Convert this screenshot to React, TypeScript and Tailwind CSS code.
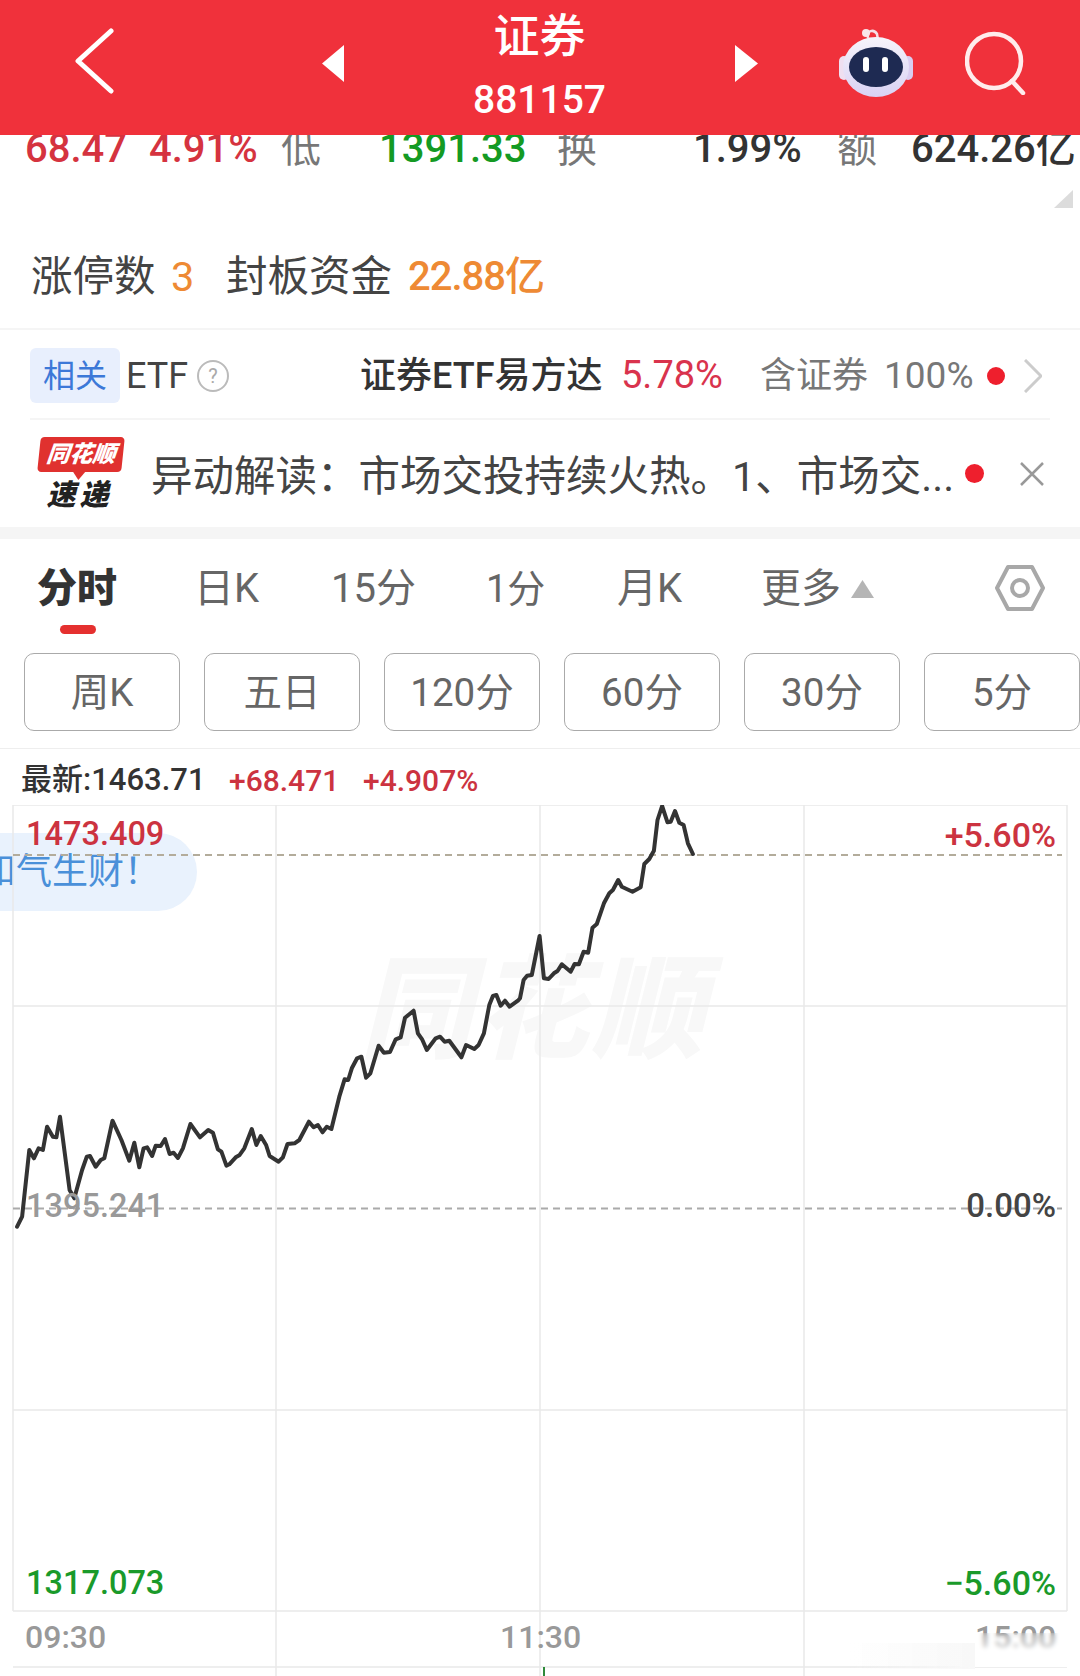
import React from 'react';

const FONT = "[font-family:Roboto,'Noto_Sans_CJK_SC',sans-serif]";

// traced from the chart, [x * 2.8, (y - 750) * 3]
const LEFT: number[][] = [
  [48,1430],[62,1400],[82,1200],[95,1225],[108,1195],[120,1200],[132,1130],[148,1160],[158,1162],[168,1100],[195,1320],[208,1345],[230,1260],[243,1220],[252,1218],[268,1250],[282,1230],[292,1225],[315,1112],[340,1170],[362,1232],[376,1178],[390,1252],[402,1195],[412,1192],[426,1218],[436,1187],[450,1188],[462,1167],[475,1212],[486,1208],[498,1224],[512,1195],[533,1122],[560,1162],[583,1140],[596,1148],[610,1198],[620,1205],[634,1247],[642,1243],[660,1222],[670,1216],[684,1195],[705,1137],[718,1185],[730,1158],[745,1185],[755,1218],[780,1235],[792,1222],[805,1182],[825,1180],[838,1170],[865,1115],[878,1132],[890,1125],[903,1147],[915,1130],[928,1137],[950,1040],[965,988],[975,990],[985,955],[1000,925],[1012,920],[1025,983],[1037,970],[1060,887],[1075,908],[1092,906],[1108,868],[1122,862],[1134,803],[1158,782],[1170,850],[1182,868],[1195,900],[1220,865],[1232,860],[1245,875],[1258,872],[1292,922],[1305,885],[1328,897],[1340,885],[1355,850],[1370,765],[1380,738],[1390,735],[1402,767],[1414,752],[1427,770],[1450,752],
];
// same, second half: [(x - 520) * 2.8, (y - 780) * 3]
const RIGHT: number[][] = [
  [0,655],[10,600],[20,587],[33,585],[55,468],[67,595],[80,597],[95,580],[105,573],[117,553],[142,575],[153,552],[165,553],[178,515],[191,518],[203,443],[215,432],[235,370],[250,340],[260,330],[275,300],[285,320],[315,335],[338,322],[348,252],[362,237],[375,212],[385,120],[398,78],[413,127],[422,125],[434,93],[446,128],[458,135],[470,190],[484,222],
];

const linePoints = [
  ...LEFT.map(([x, y]) => `${(x / 2.8).toFixed(1)},${(750 + y / 3 - 805).toFixed(1)}`),
  ...RIGHT.map(([x, y]) => `${(520 + x / 2.8).toFixed(1)},${(780 + y / 3 - 805).toFixed(1)}`),
].join(' ');

const BUTTONS = ['周K', '五日', '120分', '60分', '30分', '5分'];

const Header = () => (
  <div className="relative z-10 h-[135px] bg-[#f0313b] flex items-start text-white">
    <svg className="ml-[73px] mt-[28px] w-[42px] h-[66px]" viewBox="0 0 42 66" fill="none" stroke="#fff" strokeWidth="5">
      <path d="M38 3 L5 33 L38 63" strokeLinejoin="round" strokeLinecap="round" />
    </svg>
    <svg className="ml-[207px] mt-[45px] w-[22px] h-[37px]" viewBox="0 0 22 37" fill="#fff">
      <path d="M22 0 L22 37 L0 18.500 Z" />
    </svg>
    <div className="w-[391px] flex flex-col items-center">
      <div className="text-[46px] leading-[52px] mt-[10px] font-medium">证券</div>
      <div className="text-[39px] leading-[44px] mt-[16px] font-medium">881157</div>
    </div>
    <svg className="mt-[45px] w-[23px] h-[37px]" viewBox="0 0 23 37" fill="#fff">
      <path d="M0 0 L0 37 L23 18.500 Z" />
    </svg>
    <svg className="ml-[80px] mt-[26px] w-[76px] h-[72px]" viewBox="0 0 76 72">
      <defs>
        <linearGradient id="head" x1="0" y1="0" x2="0" y2="1">
          <stop offset="0" stopColor="#f6f4fb" />
          <stop offset="1" stopColor="#d9d2f4" />
        </linearGradient>
      </defs>
      <path d="M30 12 C28 4 36 3 39 8 L40 14" fill="none" stroke="#f6dfe6" strokeWidth="2.500" />
      <circle cx="28" cy="7" r="4" fill="#f9e6ea" />
      <rect x="1" y="30" width="10" height="24" rx="5" fill="#efdff0" />
      <rect x="65" y="30" width="10" height="24" rx="5" fill="#d9cdf0" />
      <ellipse cx="38" cy="41" rx="33" ry="30" fill="url(#head)" />
      <ellipse cx="38" cy="41" rx="27" ry="20" fill="#1e2a52" />
      <rect x="25" y="31" width="6" height="15" rx="3" fill="#fff" />
      <rect x="44" y="31" width="6" height="15" rx="3" fill="#fff" />
    </svg>
    <svg className="ml-[51px] mt-[31px] w-[64px] h-[64px]" viewBox="0 0 64 64" fill="none" stroke="#ffecec" strokeWidth="4.500">
      <circle cx="29" cy="30" r="27" />
      <path d="M47 50 L58 62" strokeLinecap="round" />
    </svg>
  </div>
);

const QuoteRow = () => (
  <div className="h-[34px] overflow-hidden flex items-end text-[40px] leading-[40px] whitespace-nowrap font-medium">
    <span className="ml-[25px] w-[124px] text-[#d5333f]">68.47</span>
    <span className="w-[132px] text-[#d5333f]">4.91%</span>
    <span className="w-[98px] text-[#777] font-normal">低</span>
    <span className="w-[178px] text-[#149a23]">1391.33</span>
    <span className="w-[136px] text-[#777] font-normal">换</span>
    <span className="w-[144px] text-[#333]">1.99%</span>
    <span className="w-[74px] text-[#777] font-normal">额</span>
    <span className="text-[#333]">624.26亿</span>
  </div>
);

const StatsRow = () => (
  <div className="relative h-[161px] border-b-2 border-[#f5f5f5]">
    <svg className="absolute left-[1054px] top-[21px] w-[19px] h-[18px]" viewBox="0 0 19 18" fill="#dcdcdc">
      <path d="M19 0 L19 18 L0 18 Z" />
    </svg>
    <div className="pt-[83px] flex items-center text-[41.500px] leading-[50px] text-[#444]">
      <span className="ml-[31px] w-[140px]">涨停数</span>
      <span className="w-[55px] text-[#ee8a34]">3</span>
      <span className="w-[182px]">封板资金</span>
      <span className="text-[#ee8a34] font-medium text-[40px] tracking-[-1px]">22.88亿</span>
    </div>
  </div>
);

const EtfRow = () => (
  <div className="mx-[30px] h-[90px] pt-[3px] border-b-2 border-[#f5f5f5] flex items-center text-[36px] whitespace-nowrap">
    <span className="w-[90px] h-[55px] bg-[#e8effd] rounded-md flex items-center justify-center text-[32px] text-[#3c78d8]">相关</span>
    <span className="ml-[6px] w-[71px] text-[#444] text-[36px]">ETF</span>
    <span className="w-[32px] h-[32px] rounded-full border-2 border-[#bbb] flex items-center justify-center text-[20px] text-[#aaa]">?</span>
    <span className="ml-[131px] w-[261px] text-[#333] font-medium">证券ETF易方达</span>
    <span className="w-[139px] text-[#d9334d] text-[38px]">5.78%</span>
    <span className="w-[124px] text-[#777]">含证券</span>
    <span className="w-[103px] text-[#777] text-[37px]">100%</span>
    <span className="w-[18px] h-[18px] rounded-full bg-[#ee1f2d]" />
    <svg className="ml-[19px] w-[18px] h-[34px]" viewBox="0 0 18 34" fill="none" stroke="#ccc" strokeWidth="3">
      <path d="M1 1 L17 17 L1 33" />
    </svg>
  </div>
);

const NewsRow = () => (
  <div className="h-[107px] pt-[6px] flex items-center whitespace-nowrap">
    <div className="ml-[36px] -mt-[4px] w-[90px] h-[76px] flex flex-col items-center">
      <div className="relative w-[84px] h-[35px] bg-[#e0312f] rounded-[4px] -skew-x-6 flex items-center justify-center text-white text-[23px] leading-none font-black italic">
        同花顺
        <div className="absolute left-[36px] top-[35px] border-x-[6px] border-t-[8px] border-x-transparent border-t-[#e0312f]" />
      </div>
      <div className="mt-[8px] -ml-[3px] text-[#222] text-[29px] leading-[30px] font-black italic tracking-[4px]">速递</div>
    </div>
    <span className="ml-[25px] w-[814px] text-[41.500px] text-[#444] leading-[50px]">异动解读：市场交投持续火热。1、市场交...</span>
    <span className="-mt-[6px] w-[19px] h-[19px] rounded-full bg-[#ee1f2d]" />
    <svg className="ml-[36px] -mt-[6px] w-[24px] h-[24px]" viewBox="0 0 24 24" fill="none" stroke="#999" strokeWidth="2.500">
      <path d="M1 1 L23 23 M23 1 L1 23" />
    </svg>
  </div>
);

const Tabs = () => (
  <div className="relative h-[114px] flex items-center text-[39px] text-[#666] whitespace-nowrap pb-[14px]">
    <span className="ml-[37px] w-[159px] font-black text-[#333] text-[40px]">分时</span>
    <span className="-ml-[2px] w-[137px] text-[40px]">日K</span>
    <span className="w-[155px] text-[40px]">15分</span>
    <span className="w-[131px] text-[38px]">1分</span>
    <span className="w-[144px] text-[40px]">月K</span>
    <span className="w-[90px] text-[40px]">更多</span>
    <svg className="w-[23px] h-[18px]" viewBox="0 0 23 18" fill="#b5b5b5"><path d="M11.500 0 L23 18 L0 18 Z" /></svg>
    <svg className="ml-[121px] -mt-[2px] w-[50px] h-[46px]" viewBox="0 0 50 46" fill="none" stroke="#a8a8a8" strokeWidth="4">
      <path d="M13 2 H37 L48 23 L37 44 H13 L2 23 Z" strokeLinejoin="round" />
      <circle cx="25" cy="23" r="8" />
    </svg>
    <div className="absolute left-[60px] top-[86px] w-[36px] h-[9px] rounded-full bg-[#e5302f]" />
  </div>
);

const Buttons = () => (
  <div className="h-[96px] pl-[24px] flex gap-[24px] border-b border-[#eee]">
    {BUTTONS.map(b => (
      <div key={b} className="w-[156px] h-[78px] rounded-[10px] border border-[#aaa] flex items-center justify-center text-[38.500px] text-[#666] pt-[2px]">
        {b}
      </div>
    ))}
  </div>
);

const Chart = () => (
  <div className="relative h-[871px] overflow-hidden">
    <div className="absolute left-[360px] top-[146px] text-[112px] leading-[120px] font-black italic text-[#f8f8f8] tracking-[4px] whitespace-nowrap">同花顺</div>
    <div className="absolute left-0 top-[28px] w-[197px] h-[78px] rounded-r-full bg-[#e9f2fd] overflow-hidden">
      <div className="absolute left-[-20px] top-[14px] text-[36px] leading-[50px] text-[#4a90d9] whitespace-nowrap">和气生财！</div>
    </div>
    <svg className="absolute left-0 top-0 w-[1080px] h-[871px]" viewBox="0 0 1080 871" fill="none">
      <g stroke="#e9e9e9" strokeWidth="1.500">
        <path d="M13 0 V806 M276 0 V871 M540 0 V871 M804 0 V871 M1067 0 V806" />
        <path d="M13 0 H1067 M13 201 H1067 M13 605 H1067 M13 806 H1067 M13 862 H1067" />
      </g>
      <path d="M13 50 H1062" stroke="#b3ac9b" strokeWidth="2" strokeDasharray="7 5" />
      <path d="M13 403.500 H1062" stroke="#aaa" strokeWidth="2" strokeDasharray="7 5" />
      <polyline points={linePoints} stroke="#333" strokeWidth="4" strokeLinejoin="round" strokeLinecap="round" />
      <path d="M544 862 V871" stroke="#2f8a3a" strokeWidth="2" />
    </svg>
    <div className="absolute left-[26px] top-[8px] text-[32.500px] leading-[42px] text-[#cc3340] font-medium">1473.409</div>
    <div className="absolute right-[24px] top-[9px] text-[34px] leading-[42px] text-[#cc3340] font-medium">+5.60%</div>
    <div className="absolute left-[26px] top-[380px] text-[32.500px] leading-[42px] text-[#999] font-medium">1395.241</div>
    <div className="absolute right-[24px] top-[380px] text-[33px] leading-[42px] text-[#444] font-medium">0.00%</div>
    <div className="absolute left-[26px] top-[757px] text-[32.500px] leading-[42px] text-[#1a9a2a] font-medium">1317.073</div>
    <div className="absolute right-[24px] top-[757px] text-[34px] leading-[42px] text-[#1a9a2a] font-medium">−5.60%</div>
    <div className="absolute left-[25px] top-[811px] text-[32px] leading-[42px] text-[#999] font-medium">09:30</div>
    <div className="absolute left-[500px] top-[811px] text-[32px] leading-[42px] text-[#999] font-medium">11:30</div>
    <div className="absolute left-[975px] top-[811px] text-[32px] leading-[42px] text-[#999] font-medium">15:00</div>
    {/* smear over the bottom right corner */}
    <div className="absolute left-[960px] top-[828px] w-[107px] h-[34px] backdrop-blur-[2px] bg-gradient-to-b from-white/0 via-white/70 to-white" />
    <div className="absolute left-[850px] top-[838px] w-[125px] h-[26px] bg-gradient-to-r from-[#fbfbfb]/0 to-[#f8f8f8]" />
  </div>
);

export default function App() {
  return (
    <div className={`w-[1080px] h-[1676px] overflow-hidden bg-white ${FONT}`}>
      <Header />
      <QuoteRow />
      <StatsRow />
      <EtfRow />
      <NewsRow />
      <div className="h-[12px] bg-[#f5f5f5]" />
      <Tabs />
      <Buttons />
      <div className="h-[56px] pt-[6px] flex items-center text-[31px] whitespace-nowrap pl-[21px] font-medium">
        <span className="w-[208px] text-[#333]">最新:1463.71</span>
        <span className="w-[134px] text-[#cc3340] text-[30px]">+68.471</span>
        <span className="text-[#cc3340] text-[30px]">+4.907%</span>
      </div>
      <Chart />
    </div>
  );
}
